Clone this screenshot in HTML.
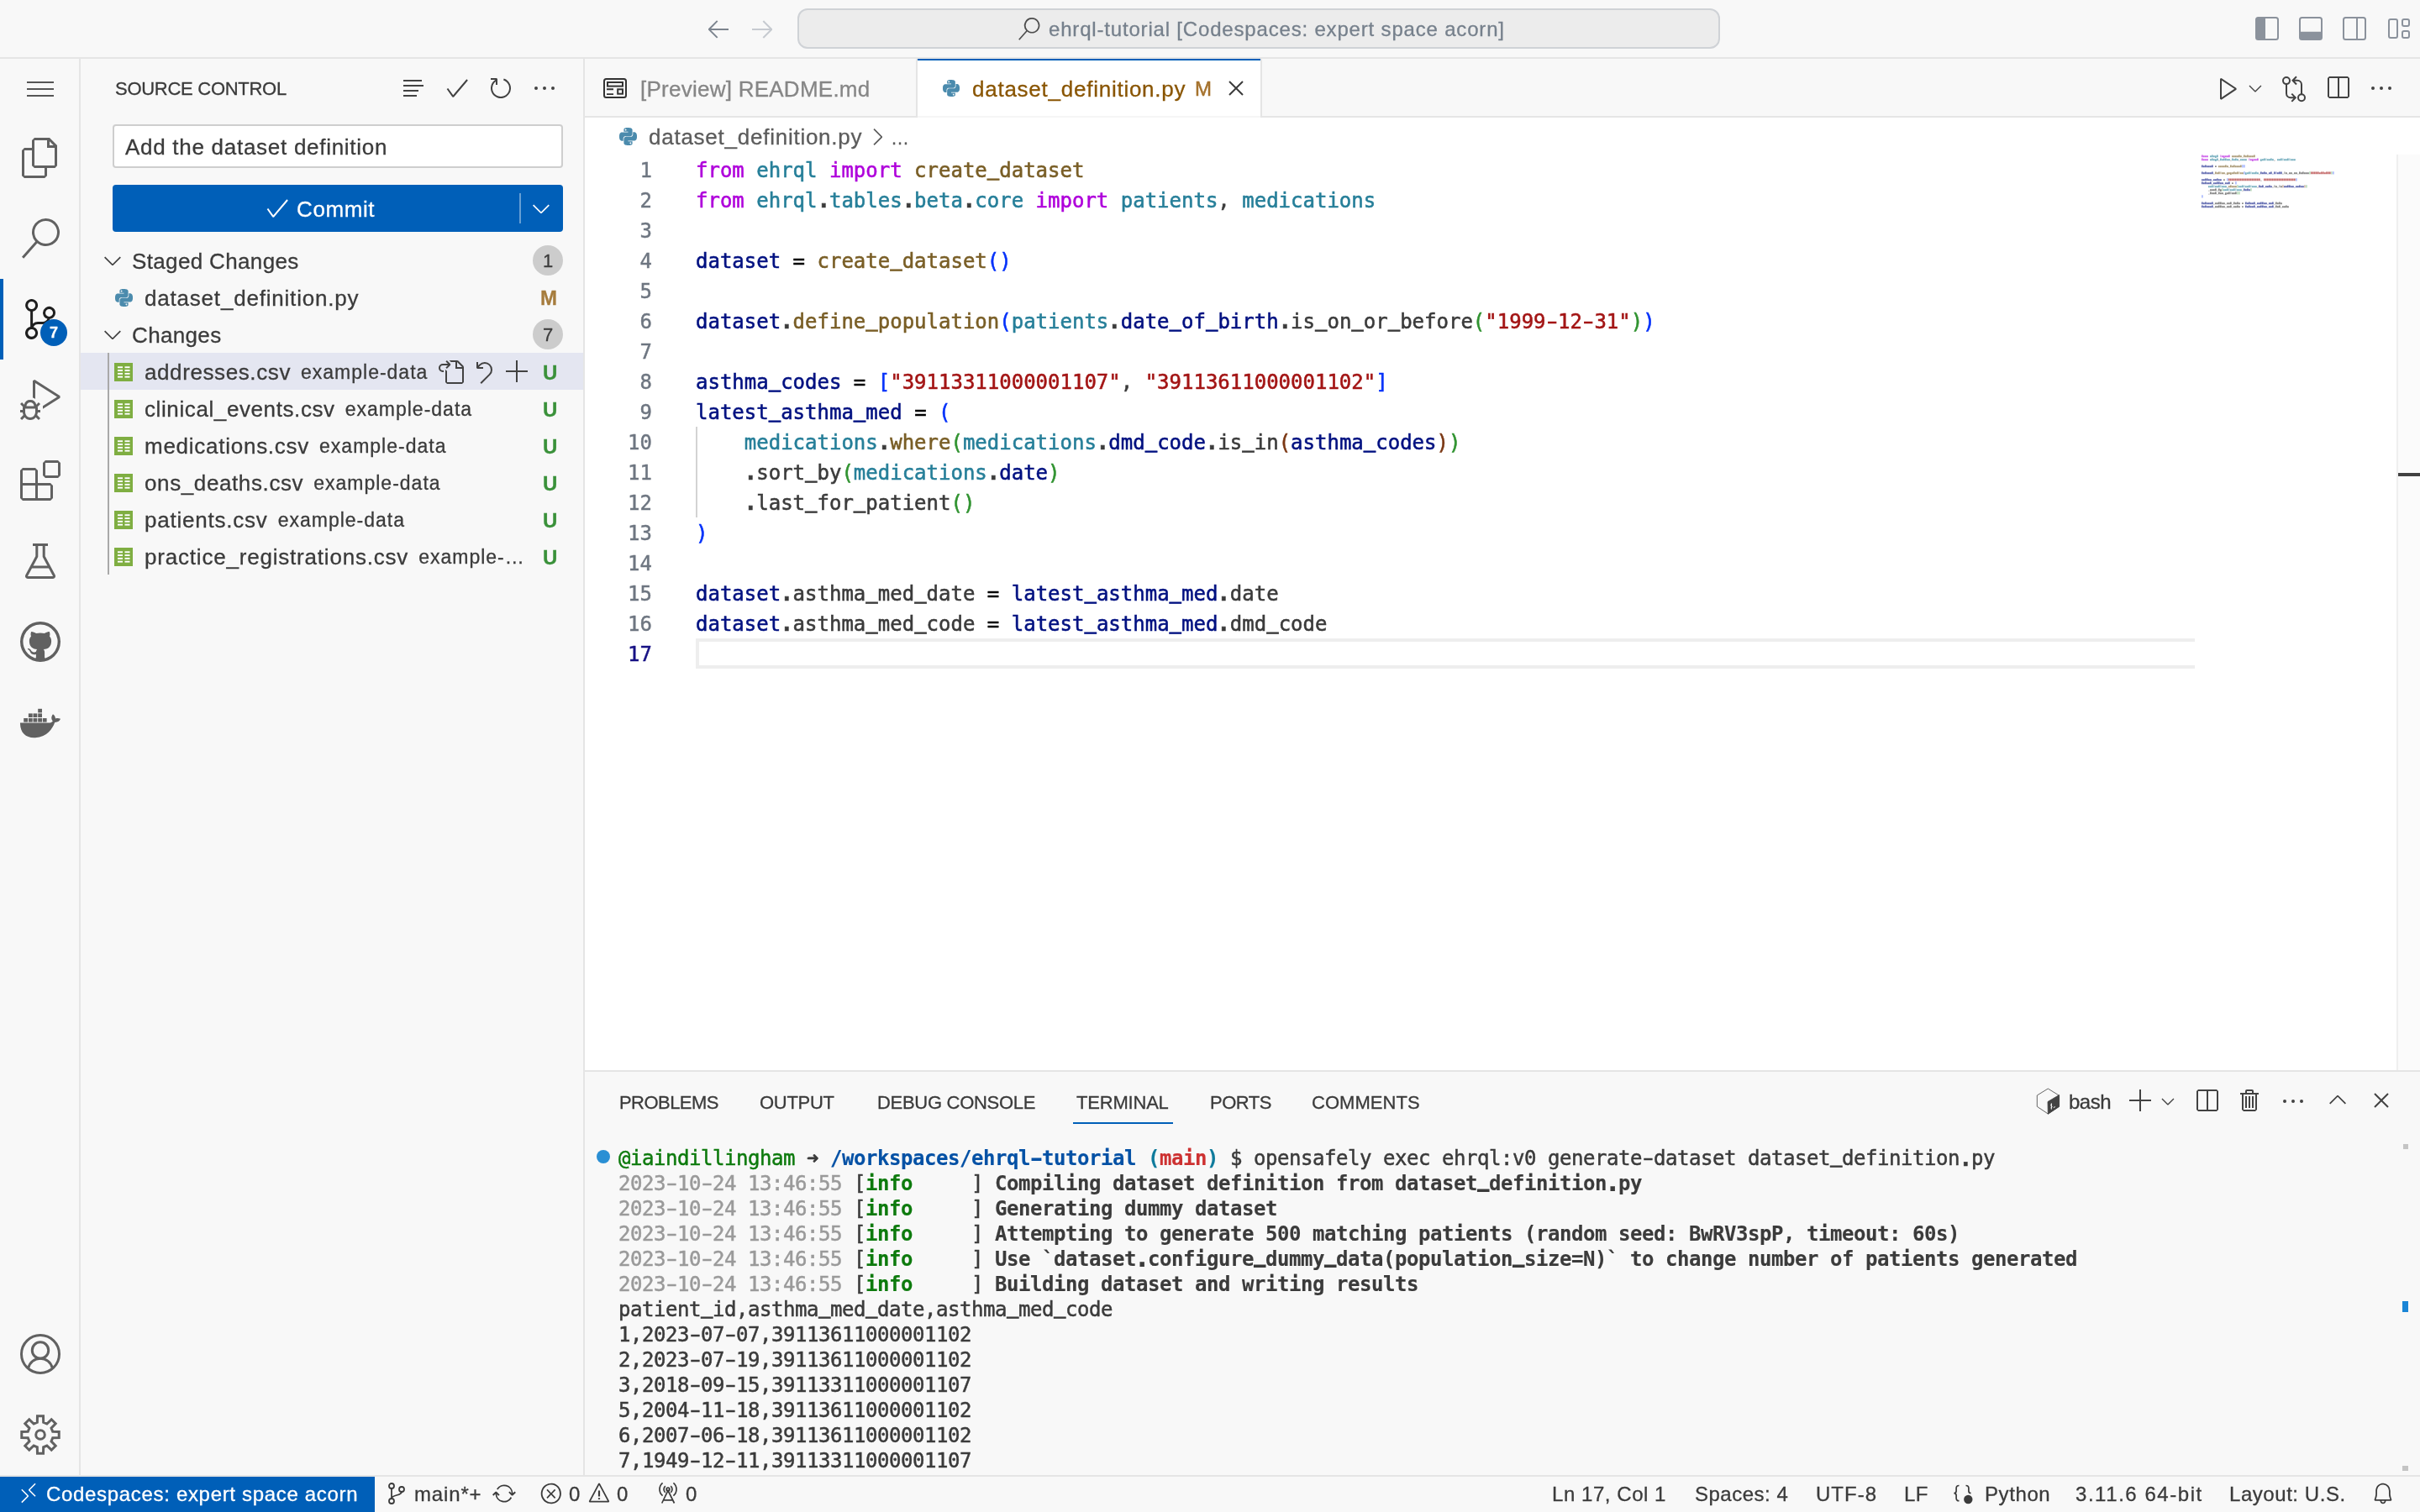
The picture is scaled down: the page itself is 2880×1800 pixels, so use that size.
<!DOCTYPE html>
<html lang="en"><head><meta charset="utf-8"><title>dataset_definition.py — ehrql-tutorial [Codespaces: expert space acorn]</title>
<style>
html,body{margin:0;padding:0;}
body{width:2880px;height:1800px;overflow:hidden;background:#f8f8f8;font-family:"Liberation Sans", Arial, sans-serif;position:relative;-webkit-font-smoothing:antialiased;}
div,svg{box-sizing:border-box;}
.mono{font-family:"DejaVu Sans Mono", "Liberation Mono", monospace;}
.code{position:absolute;left:828px;height:36px;line-height:38px;font-size:24px;font-family:"DejaVu Sans Mono", "Liberation Mono", monospace;white-space:pre;color:#3b3b3b;letter-spacing:0;-webkit-text-stroke:0.55px;}
.ln{position:absolute;left:696px;width:80px;text-align:right;height:36px;line-height:38px;font-size:24px;font-family:"DejaVu Sans Mono", "Liberation Mono", monospace;color:#6e7681;-webkit-text-stroke:0.45px;}
.kw{color:#af00db}.mod{color:#267f99}.fn{color:#795e26}.var{color:#001080}.str{color:#a31515}.op{color:#000}
.b1{color:#0431fa}.b2{color:#319331}.b3{color:#7b3814}
.term{position:absolute;left:736px;height:30px;line-height:30px;font-size:24px;font-family:"DejaVu Sans Mono", "Liberation Mono", monospace;white-space:pre;color:#3b3b3b;letter-spacing:-0.45px;-webkit-text-stroke:0.5px;}
.term b{font-weight:700;-webkit-text-stroke:0.15px;}
.h{display:inline-block;transform:scaleX(1.55);}
.p{display:inline-block;transform:scale(1.35);transform-origin:50% 68%;}
.code .u{transform-origin:50% 32px;}
.u{display:inline-block;transform:translateY(-2.500px) scaleY(1.45);transform-origin:50% 100%;}
.tg{color:#0d7a0d}.tb{color:#0451a5}.tc{color:#0f7b9c}.tr{color:#cd3131}.td{color:#9a9a9a}
.row{position:absolute;left:96px;width:598px;height:44px;line-height:44px;font-size:26px;color:#3b3b3b;white-space:pre;}
</style></head><body><div id="root" style="position:absolute;left:0;top:0;width:2880px;height:1800px;overflow:hidden;will-change:transform;-webkit-text-stroke:0.3px;">

<!-- title bar -->
<div style="position:absolute;left:0px;top:0px;width:2880px;height:70px;background:#f8f8f8;border-bottom:2px solid #e5e5e5;"></div>
<svg style="position:absolute;left:839px;top:18px" width="32" height="32" viewBox="0 0 16 16" ><path fill="#7c848e" fill-rule="evenodd" clip-rule="evenodd" d="M7 3.093l-5 5V8.800l5 5 .707-.707-4.146-4.147H14v-1H3.560L7.707 3.800 7 3.093z"/></svg>
<svg style="position:absolute;left:891px;top:18px" width="32" height="32" viewBox="0 0 16 16" ><path fill="#c6cad0" fill-rule="evenodd" clip-rule="evenodd" d="M9 13.887l5-5V8.180l-5-5-.707.707 4.146 4.147H2v1h10.440L8.293 13.180l.707.707z"/></svg>
<div style="position:absolute;left:949px;top:10px;width:1098px;height:48px;background:#ececec;border:2px solid #cfd2d6;border-radius:12px;"></div>
<svg style="position:absolute;left:1211px;top:21px" width="27" height="27" viewBox="0 0 24 24" ><path fill="#4d4d4d" fill-rule="evenodd" clip-rule="evenodd" d="M15.250 0a8.250 8.250 0 0 0-6.180 13.720L1 22.880l1.120 1 8.050-9.120A8.251 8.251 0 1 0 15.250.010V0zm0 15a6.750 6.750 0 1 1 0-13.500 6.750 6.750 0 0 1 0 13.500z"/></svg>
<div style="position:absolute;left:1248px;top:20px;font-size:24px;line-height:30px;color:#76808c;white-space:pre;letter-spacing:0.82px;">ehrql-tutorial [Codespaces: expert space acorn]</div>
<svg style="position:absolute;left:2684px;top:20px" width="28" height="28" viewBox="0 0 28 28" ><rect x="1" y="1" width="26" height="26" rx="2.500" fill="none" stroke="#8b929c" stroke-width="2"/><path d="M1 3a2 2 0 0 1 2-2h9v26H3a2 2 0 0 1-2-2z" fill="#8b929c"/></svg>
<svg style="position:absolute;left:2736px;top:20px" width="28" height="28" viewBox="0 0 28 28" ><rect x="1" y="1" width="26" height="26" rx="2.500" fill="none" stroke="#8b929c" stroke-width="2"/><path d="M1 17.700h26V25a2 2 0 0 1-2 2H3a2 2 0 0 1-2-2z" fill="#8b929c"/></svg>
<svg style="position:absolute;left:2788px;top:20px" width="28" height="28" viewBox="0 0 28 28" ><rect x="1" y="1" width="26" height="26" rx="2.500" fill="none" stroke="#8b929c" stroke-width="2"/><path d="M17 1v26" stroke="#8b929c" stroke-width="2" fill="none"/></svg>
<svg style="position:absolute;left:2841px;top:20px" width="30" height="28" viewBox="0 0 30 28" ><rect x="2" y="3" width="10" height="22" rx="2" fill="none" stroke="#8b929c" stroke-width="2"/><rect x="18" y="3" width="8" height="8" rx="2" fill="none" stroke="#8b929c" stroke-width="2"/><rect x="18" y="17" width="8" height="8" rx="2" fill="none" stroke="#8b929c" stroke-width="2"/></svg>
<!-- activity bar -->
<div style="position:absolute;left:0px;top:70px;width:96px;height:1686px;background:#f8f8f8;border-right:2px solid #e5e5e5;"></div>
<div style="position:absolute;left:32px;top:97px;width:32px;height:2px;background:#555;"></div>
<div style="position:absolute;left:32px;top:105px;width:32px;height:2px;background:#555;"></div>
<div style="position:absolute;left:32px;top:113px;width:32px;height:2px;background:#555;"></div>
<svg style="position:absolute;left:24px;top:164px" width="48" height="48" viewBox="0 0 24 24" ><path fill="#616161" fill-rule="evenodd" clip-rule="evenodd" d="M17.5 0h-9L7 1.5V6H2.5L1 7.500v15.070L2.500 24h12.070L16 22.570V18h4.700l1.300-1.430V4.500L17.500 0zm0 2.120l2.380 2.380H17.500V2.120zm-3 20.380h-12v-15H7v9.070L8.500 18h6v4.500zm6-6h-12v-15H16V6h4.500v10.500z"/></svg>
<svg style="position:absolute;left:24px;top:260px" width="48" height="48" viewBox="0 0 24 24" ><path fill="#616161" fill-rule="evenodd" clip-rule="evenodd" d="M15.250 0a8.250 8.250 0 0 0-6.180 13.720L1 22.880l1.120 1 8.050-9.120A8.251 8.251 0 1 0 15.250.010V0zm0 15a6.750 6.750 0 1 1 0-13.500 6.750 6.750 0 0 1 0 13.500z"/></svg>
<div style="position:absolute;left:0px;top:332px;width:4px;height:96px;background:#005fb8;"></div>
<svg style="position:absolute;left:24px;top:356px" width="48" height="48" viewBox="0 0 24 24" ><path fill="#1f1f1f" fill-rule="evenodd" clip-rule="evenodd" d="M21.007 8.222A3.738 3.738 0 0 0 15.045 5.200a3.737 3.737 0 0 0 1.156 6.583 2.988 2.988 0 0 1-2.668 1.670h-2.990a4.456 4.456 0 0 0-2.989 1.165V7.400a3.737 3.737 0 1 0-1.494 0v9.117a3.776 3.776 0 1 0 1.816.099 2.990 2.990 0 0 1 2.668-1.667h2.990a4.484 4.484 0 0 0 4.223-3.039 3.736 3.736 0 0 0 3.250-3.687zM4.565 3.738a2.242 2.242 0 1 1 4.484 0 2.242 2.242 0 0 1-4.484 0zm4.484 16.441a2.242 2.242 0 1 1-4.484 0 2.242 2.242 0 0 1 4.484 0zm8.221-9.715a2.242 2.242 0 1 1 0-4.485 2.242 2.242 0 0 1 0 4.485z"/></svg>
<div style="position:absolute;left:48px;top:380px;width:32px;height:32px;border-radius:16px;background:#005fb8;color:#fff;font-size:18px;font-weight:700;line-height:32px;text-align:center;">7</div>
<svg style="position:absolute;left:24px;top:452px" width="48" height="48" viewBox="0 0 24 24" ><path fill="#616161" fill-rule="evenodd" clip-rule="evenodd" d="M10.940 13.500l-1.320 1.320a3.730 3.730 0 0 0-7.240 0L1.060 13.500 0 14.560l1.720 1.720-.220.220V18H0v1.500h1.500v.080c.077.489.214.966.410 1.420L0 22.940 1.060 24l1.650-1.650A4.308 4.308 0 0 0 6 24a4.310 4.310 0 0 0 3.290-1.650L10.940 24 12 22.940 10.090 21c.198-.464.336-.951.410-1.450v-.1H12V18h-1.500v-1.500l-.220-.220L12 14.560l-1.060-1.060zM6 13.500a2.250 2.250 0 0 1 2.250 2.250h-4.500A2.250 2.250 0 0 1 6 13.500zm3 6a3.330 3.330 0 0 1-3 3 3.330 3.330 0 0 1-3-3v-2.250h6v2.250zm14.760-9.900v1.260L13.500 17.370V15.600l8.500-5.370L9 2v9.460a5.070 5.070 0 0 0-1.500-.720V.630L8.640 0l15.120 9.600z"/></svg>
<svg style="position:absolute;left:24px;top:548px" width="48" height="48" viewBox="0 0 24 24" ><path fill="#616161" fill-rule="evenodd" clip-rule="evenodd" d="M13.500 1.500L15 0h7.500L24 1.500V9l-1.500 1.500H15L13.500 9V1.500zm1.500 0V9h7.500V1.500H15zM0 15V6l1.500-1.500H9L10.500 6v7.500H18l1.500 1.500v7.500L18 24H1.500L0 22.500V15zm9-1.500V6H1.500v7.500H9zM9 15H1.500v7.500H9V15zm1.500 7.500H18V15h-7.500v7.500z"/></svg>
<svg style="position:absolute;left:24px;top:644px" width="48" height="48" viewBox="0 0 48 48" ><g fill="none" stroke="#616161" stroke-width="3" stroke-linejoin="round"><path d="M15 4.500h18"/><path d="M19.800 5v13.500L7.600 41.200a1.600 1.600 0 0 0 1.400 2.300h30a1.600 1.600 0 0 0 1.400-2.300L28.200 18.500V5"/><path d="M13.500 31h21"/></g></svg>
<svg style="position:absolute;left:24px;top:740px" width="48" height="48" viewBox="0 0 24 24" ><path fill="#616161" fill-rule="evenodd" clip-rule="evenodd" d="M12 0a12 12 0 1 0 0 24 12 12 0 0 0 0-24zm3.163 21.783h-.093a.513.513 0 0 1-.382-.14.513.513 0 0 1-.14-.372v-1.406c.006-.467.01-.94.01-1.416a3.693 3.693 0 0 0-.151-1.028 1.832 1.832 0 0 0-.542-.875 8.014 8.014 0 0 0 2.038-.471 4.051 4.051 0 0 0 1.466-.964c.407-.427.71-.943.885-1.506a6.770 6.770 0 0 0 .3-2.130 4.138 4.138 0 0 0-.26-1.476 3.892 3.892 0 0 0-.795-1.284 2.810 2.810 0 0 0 .162-.582c.033-.2.05-.402.05-.604 0-.26-.03-.52-.09-.773a5.309 5.309 0 0 0-.221-.763.293.293 0 0 0-.111-.02h-.11c-.23.002-.456.04-.674.111a5.340 5.340 0 0 0-.703.26 6.503 6.503 0 0 0-.661.343c-.215.127-.405.249-.573.362a9.578 9.578 0 0 0-5.143 0 13.507 13.507 0 0 0-.572-.362 6.022 6.022 0 0 0-.672-.342 4.516 4.516 0 0 0-.705-.261 2.203 2.203 0 0 0-.662-.111h-.11a.290.290 0 0 0-.11.02 5.844 5.844 0 0 0-.23.763c-.054.254-.08.513-.081.773 0 .202.017.404.051.604.033.199.086.394.16.582A3.888 3.888 0 0 0 5.702 10a4.142 4.142 0 0 0-.263 1.476 6.871 6.871 0 0 0 .292 2.120c.181.563.483 1.080.884 1.516.415.422.920.750 1.476.964.653.250 1.337.410 2.033.476a1.828 1.828 0 0 0-.452.633 2.990 2.990 0 0 0-.2.744 2.754 2.754 0 0 1-1.175.270 1.788 1.788 0 0 1-1.065-.3 2.904 2.904 0 0 1-.752-.824 3.100 3.100 0 0 0-.292-.382 2.693 2.693 0 0 0-.372-.343 1.841 1.841 0 0 0-.432-.240 1.200 1.200 0 0 0-.481-.101c-.04.001-.08.005-.12.01a.649.649 0 0 0-.162.02.408.408 0 0 0-.13.06.116.116 0 0 0-.06.1.330.330 0 0 0 .14.242c.093.074.17.131.232.171l.03.021c.133.103.261.214.382.333.112.098.213.209.3.330.09.119.168.246.231.381.073.134.15.288.231.463.188.474.522.875.954 1.145.453.243.961.364 1.476.351.174 0 .349-.01.522-.03.172-.028.343-.057.515-.091v1.743a.5.5 0 0 1-.533.521h-.062a10.286 10.286 0 1 1 6.324 0v.005z"/></svg>
<svg style="position:absolute;left:24px;top:836px" width="48" height="48" viewBox="0 0 48 48" ><g fill="#616161"><rect x="4.2" y="19.0" width="4.8" height="4.6"/><rect x="9.9" y="19.0" width="4.8" height="4.6"/><rect x="15.5" y="19.0" width="4.8" height="4.6"/><rect x="21.2" y="19.0" width="4.8" height="4.6"/><rect x="26.8" y="19.0" width="4.8" height="4.6"/><rect x="9.9" y="13.4" width="4.8" height="4.6"/><rect x="15.5" y="13.4" width="4.8" height="4.6"/><rect x="21.2" y="13.4" width="4.8" height="4.6"/><rect x="21.2" y="7.8" width="4.8" height="4.6"/><path d="M0 24.500h35.500c1.400-.200 2.500-.900 3.300-1.900-1.400-1.500-1.700-3.500-1.400-5.200.300-1.200.800-2.300 1.600-3.200 1.900 1.300 2.900 3.200 3 5.200 1.700-.600 4.200-.500 6 .400-.700 2.300-3 4-6.800 4.200C38.500 31.500 32.500 41 18 42.200 6.500 42.800-.200 36 0 24.500z"/></g></svg>
<svg style="position:absolute;left:24px;top:1588px" width="48" height="48" viewBox="0 0 48 48" ><g fill="none" stroke="#616161" stroke-width="3"><circle cx="24" cy="24" r="22.500"/><circle cx="24" cy="19.500" r="9.700"/><path d="M9.800 40.500c1.500-6.500 7.200-11.300 14.200-11.300s12.700 4.800 14.200 11.300"/></g></svg>
<svg style="position:absolute;left:24px;top:1684px" width="48" height="48" viewBox="0 0 48 48" ><g fill="none" stroke="#616161" stroke-width="3" stroke-linejoin="miter"><path d="M20.34 9.25L20.48 1.78L27.52 1.78L27.66 9.25L31.84 10.98L37.23 5.80L42.20 10.77L37.02 16.16L38.75 20.34L46.22 20.48L46.22 27.52L38.75 27.66L37.02 31.84L42.20 37.23L37.23 42.20L31.84 37.02L27.66 38.75L27.52 46.22L20.48 46.22L20.34 38.75L16.16 37.02L10.77 42.20L5.80 37.23L10.98 31.84L9.25 27.66L1.78 27.52L1.78 20.48L9.25 20.34L10.98 16.16L5.80 10.77L10.77 5.80L16.16 10.98Z"/><circle cx="24" cy="24" r="5.300"/></g></svg>
<!-- sidebar -->
<div style="position:absolute;left:96px;top:70px;width:600px;height:1686px;background:#f8f8f8;border-right:2px solid #e5e5e5;"></div>
<div style="position:absolute;left:137px;top:93px;font-size:22px;line-height:26px;color:#3b3b3b;white-space:pre;letter-spacing:-0.28px;">SOURCE CONTROL</div>
<div style="position:absolute;left:480px;top:95px;width:22px;height:2px;background:#424242;"></div>
<div style="position:absolute;left:480px;top:101px;width:24px;height:2px;background:#424242;"></div>
<div style="position:absolute;left:480px;top:107px;width:18px;height:2px;background:#424242;"></div>
<div style="position:absolute;left:480px;top:113px;width:16px;height:2px;background:#424242;"></div>
<svg style="position:absolute;left:528px;top:89px" width="32" height="32" viewBox="0 0 16 16" ><path fill="#424242" fill-rule="evenodd" clip-rule="evenodd" d="M14.431 3.323l-8.47 10-.79-.036-3.35-4.77.818-.574 2.978 4.24 8.051-9.506.764.646z"/></svg>
<svg style="position:absolute;left:580px;top:89px" width="32" height="32" viewBox="0 0 16 16" ><path fill="#424242" fill-rule="evenodd" clip-rule="evenodd" d="M4.681 3H2V2h3.5l.5.5V6H5V4a5 5 0 1 0 4.53-.761l.302-.954A6 6 0 1 1 4.681 3z"/></svg>
<svg style="position:absolute;left:632px;top:89px" width="32" height="32" viewBox="0 0 16 16" ><path fill="#424242" fill-rule="evenodd" clip-rule="evenodd" d="M4 8a1 1 0 1 1-2 0 1 1 0 0 1 2 0zm5 0a1 1 0 1 1-2 0 1 1 0 0 1 2 0zm5 0a1 1 0 1 1-2 0 1 1 0 0 1 2 0z"/></svg>
<div style="position:absolute;left:134px;top:148px;width:536px;height:52px;background:#fff;border:2px solid #cecece;border-radius:4px;"></div>
<div style="position:absolute;left:149px;top:159px;font-size:26px;line-height:32px;color:#3b3b3b;white-space:pre;letter-spacing:0.72px;">Add the dataset definition</div>
<div style="position:absolute;left:134px;top:220px;width:536px;height:56px;background:#005fb8;border-radius:4px;"></div>
<svg style="position:absolute;left:314px;top:232px" width="32" height="32" viewBox="0 0 16 16" ><path fill="#fff" fill-rule="evenodd" clip-rule="evenodd" d="M14.431 3.323l-8.47 10-.79-.036-3.35-4.77.818-.574 2.978 4.24 8.051-9.506.764.646z"/></svg>
<div style="position:absolute;left:353px;top:233px;font-size:26px;line-height:32px;color:#fff;white-space:pre;letter-spacing:0.6px;">Commit</div>
<div style="position:absolute;left:618px;top:230px;width:2px;height:36px;background:rgba(255,255,255,0.4);"></div>
<svg style="position:absolute;left:628px;top:232px" width="32" height="32" viewBox="0 0 16 16" ><path fill="#fff" fill-rule="evenodd" clip-rule="evenodd" d="M7.976 10.072l4.357-4.357.62.618L8.284 11h-.618L3 6.333l.619-.618 4.357 4.357z"/></svg>
<svg style="position:absolute;left:118px;top:294px" width="32" height="32" viewBox="0 0 16 16" ><path fill="#424242" fill-rule="evenodd" clip-rule="evenodd" d="M7.976 10.072l4.357-4.357.62.618L8.284 11h-.618L3 6.333l.619-.618 4.357 4.357z"/></svg><div style="position:absolute;left:157px;top:289px;font-size:26px;line-height:44px;color:#3b3b3b;white-space:pre;letter-spacing:0.35px;">Staged Changes</div><div style="position:absolute;left:634px;top:292px;width:36px;height:36px;border-radius:18px;background:#cccccc;color:#3b3b3b;font-size:22px;line-height:38px;text-align:center;">1</div>
<svg style="position:absolute;left:137px;top:344px" width="21" height="21" viewBox="0 0 24 24" ><path fill="#4b8bad" fill-rule="evenodd" clip-rule="evenodd" d="M14.25.18l.9.2.73.26.59.3.45.32.34.34.25.34.16.33.1.3.04.26.02.2-.01.13V8.5l-.05.63-.13.55-.21.46-.26.38-.3.31-.33.25-.35.19-.35.14-.33.1-.3.07-.26.04-.21.02H8.77l-.69.05-.59.14-.5.22-.41.27-.33.32-.27.35-.2.36-.15.37-.1.35-.07.32-.04.27-.02.21v3.06H3.17l-.21-.03-.28-.07-.32-.12-.35-.18-.36-.26-.36-.36-.35-.46-.32-.59-.28-.73-.21-.88-.14-1.05-.05-1.23.06-1.22.16-1.04.24-.87.32-.71.36-.57.4-.44.42-.33.42-.24.4-.16.36-.1.32-.05.24-.01h.16l.06.01h8.16v-.83H6.18l-.01-2.75-.02-.37.05-.34.11-.31.17-.28.25-.26.31-.23.38-.2.44-.18.51-.15.58-.12.64-.1.71-.06.77-.04.84-.02 1.27.05zm-6.3 1.98l-.23.33-.08.41.08.41.23.34.33.22.41.09.41-.09.33-.22.23-.34.08-.41-.08-.41-.23-.33-.33-.22-.41-.09-.41.09zm13.090 3.950l.28.06.32.12.35.18.36.27.36.35.35.47.32.59.28.73.21.88.14 1.040.05 1.230-.06 1.230-.16 1.040-.24.86-.32.71-.36.57-.4.45-.42.33-.42.24-.4.16-.36.09-.32.05-.24.02-.16-.01h-8.220v.82h5.840l.01 2.760.02.36-.05.34-.11.31-.17.29-.25.25-.31.24-.38.2-.44.17-.51.15-.58.13-.64.09-.71.07-.77.04-.84.01-1.270-.04-1.070-.14-.9-.2-.73-.25-.59-.3-.45-.33-.34-.34-.25-.34-.16-.33-.1-.3-.04-.25-.02-.2.01-.13v-5.340l.05-.64.13-.54.21-.46.26-.38.3-.32.33-.24.35-.2.35-.14.33-.1.3-.06.26-.04.21-.02.13-.01h5.840l.69-.05.59-.14.5-.21.41-.28.33-.32.27-.35.2-.36.15-.36.1-.35.07-.32.04-.28.02-.21V6.070h2.090l.14.01zm-6.470 14.250l-.23.33-.08.41.08.41.23.33.33.23.41.08.41-.08.33-.23.23-.33.08-.41-.08-.41-.23-.33-.33-.23-.41-.08-.41.08z"/></svg>
<div style="position:absolute;left:172px;top:333px;font-size:26px;line-height:44px;color:#3b3b3b;white-space:pre;letter-spacing:0.8px;">dataset_definition.py</div>
<div style="position:absolute;left:643px;top:333px;font-size:24px;line-height:44px;color:#a67c3d;white-space:pre;font-weight:700;">M</div>
<svg style="position:absolute;left:118px;top:382px" width="32" height="32" viewBox="0 0 16 16" ><path fill="#424242" fill-rule="evenodd" clip-rule="evenodd" d="M7.976 10.072l4.357-4.357.62.618L8.284 11h-.618L3 6.333l.619-.618 4.357 4.357z"/></svg><div style="position:absolute;left:157px;top:377px;font-size:26px;line-height:44px;color:#3b3b3b;white-space:pre;letter-spacing:0.35px;">Changes</div><div style="position:absolute;left:634px;top:380px;width:36px;height:36px;border-radius:18px;background:#cccccc;color:#3b3b3b;font-size:22px;line-height:38px;text-align:center;">7</div>
<div style="position:absolute;left:96px;top:420px;width:598px;height:44px;background:#e4e6f1;"></div>
<div style="position:absolute;left:128px;top:420px;width:2px;height:264px;background:#a9a9a9;"></div>
<svg style="position:absolute;left:136px;top:432px" width="22" height="22" viewBox="0 0 22 22" ><rect x="0" y="0" width="22" height="22" fill="#7fae42"/><rect x="4" y="4.3" width="6" height="1.900" fill="#fff"/><rect x="12.5" y="4.3" width="6" height="1.900" fill="#fff"/><rect x="4" y="8.1" width="6" height="1.900" fill="#fff"/><rect x="12.5" y="8.1" width="6" height="1.900" fill="#fff"/><rect x="4" y="11.9" width="6" height="1.900" fill="#fff"/><rect x="12.5" y="11.9" width="6" height="1.900" fill="#fff"/><rect x="4" y="15.7" width="6" height="1.900" fill="#fff"/><rect x="12.5" y="15.7" width="6" height="1.900" fill="#fff"/></svg>
<div class="row" style="left:172px;top:421px;width:454px;letter-spacing:0.6px;display:flex;overflow:hidden;"><span style="flex:none;">addresses.csv</span><span style="flex:0 1 auto;min-width:0;overflow:hidden;text-overflow:ellipsis;font-size:23px;letter-spacing:1.0px;margin-left:12px;">example-data</span></div>
<div style="position:absolute;left:646px;top:422px;font-size:24px;line-height:44px;color:#3a913a;white-space:pre;font-weight:700;">U</div>
<svg style="position:absolute;left:136px;top:476px" width="22" height="22" viewBox="0 0 22 22" ><rect x="0" y="0" width="22" height="22" fill="#7fae42"/><rect x="4" y="4.3" width="6" height="1.900" fill="#fff"/><rect x="12.5" y="4.3" width="6" height="1.900" fill="#fff"/><rect x="4" y="8.1" width="6" height="1.900" fill="#fff"/><rect x="12.5" y="8.1" width="6" height="1.900" fill="#fff"/><rect x="4" y="11.9" width="6" height="1.900" fill="#fff"/><rect x="12.5" y="11.9" width="6" height="1.900" fill="#fff"/><rect x="4" y="15.7" width="6" height="1.900" fill="#fff"/><rect x="12.5" y="15.7" width="6" height="1.900" fill="#fff"/></svg>
<div class="row" style="left:172px;top:465px;width:454px;letter-spacing:0.6px;display:flex;overflow:hidden;"><span style="flex:none;">clinical_events.csv</span><span style="flex:0 1 auto;min-width:0;overflow:hidden;text-overflow:ellipsis;font-size:23px;letter-spacing:1.0px;margin-left:12px;">example-data</span></div>
<div style="position:absolute;left:646px;top:466px;font-size:24px;line-height:44px;color:#3a913a;white-space:pre;font-weight:700;">U</div>
<svg style="position:absolute;left:136px;top:520px" width="22" height="22" viewBox="0 0 22 22" ><rect x="0" y="0" width="22" height="22" fill="#7fae42"/><rect x="4" y="4.3" width="6" height="1.900" fill="#fff"/><rect x="12.5" y="4.3" width="6" height="1.900" fill="#fff"/><rect x="4" y="8.1" width="6" height="1.900" fill="#fff"/><rect x="12.5" y="8.1" width="6" height="1.900" fill="#fff"/><rect x="4" y="11.9" width="6" height="1.900" fill="#fff"/><rect x="12.5" y="11.9" width="6" height="1.900" fill="#fff"/><rect x="4" y="15.7" width="6" height="1.900" fill="#fff"/><rect x="12.5" y="15.7" width="6" height="1.900" fill="#fff"/></svg>
<div class="row" style="left:172px;top:509px;width:454px;letter-spacing:0.74px;display:flex;overflow:hidden;"><span style="flex:none;">medications.csv</span><span style="flex:0 1 auto;min-width:0;overflow:hidden;text-overflow:ellipsis;font-size:23px;letter-spacing:1.0px;margin-left:12px;">example-data</span></div>
<div style="position:absolute;left:646px;top:510px;font-size:24px;line-height:44px;color:#3a913a;white-space:pre;font-weight:700;">U</div>
<svg style="position:absolute;left:136px;top:564px" width="22" height="22" viewBox="0 0 22 22" ><rect x="0" y="0" width="22" height="22" fill="#7fae42"/><rect x="4" y="4.3" width="6" height="1.900" fill="#fff"/><rect x="12.5" y="4.3" width="6" height="1.900" fill="#fff"/><rect x="4" y="8.1" width="6" height="1.900" fill="#fff"/><rect x="12.5" y="8.1" width="6" height="1.900" fill="#fff"/><rect x="4" y="11.9" width="6" height="1.900" fill="#fff"/><rect x="12.5" y="11.9" width="6" height="1.900" fill="#fff"/><rect x="4" y="15.7" width="6" height="1.900" fill="#fff"/><rect x="12.5" y="15.7" width="6" height="1.900" fill="#fff"/></svg>
<div class="row" style="left:172px;top:553px;width:454px;letter-spacing:0.61px;display:flex;overflow:hidden;"><span style="flex:none;">ons_deaths.csv</span><span style="flex:0 1 auto;min-width:0;overflow:hidden;text-overflow:ellipsis;font-size:23px;letter-spacing:1.0px;margin-left:12px;">example-data</span></div>
<div style="position:absolute;left:646px;top:554px;font-size:24px;line-height:44px;color:#3a913a;white-space:pre;font-weight:700;">U</div>
<svg style="position:absolute;left:136px;top:608px" width="22" height="22" viewBox="0 0 22 22" ><rect x="0" y="0" width="22" height="22" fill="#7fae42"/><rect x="4" y="4.3" width="6" height="1.900" fill="#fff"/><rect x="12.5" y="4.3" width="6" height="1.900" fill="#fff"/><rect x="4" y="8.1" width="6" height="1.900" fill="#fff"/><rect x="12.5" y="8.1" width="6" height="1.900" fill="#fff"/><rect x="4" y="11.9" width="6" height="1.900" fill="#fff"/><rect x="12.5" y="11.9" width="6" height="1.900" fill="#fff"/><rect x="4" y="15.7" width="6" height="1.900" fill="#fff"/><rect x="12.5" y="15.7" width="6" height="1.900" fill="#fff"/></svg>
<div class="row" style="left:172px;top:597px;width:454px;letter-spacing:0.78px;display:flex;overflow:hidden;"><span style="flex:none;">patients.csv</span><span style="flex:0 1 auto;min-width:0;overflow:hidden;text-overflow:ellipsis;font-size:23px;letter-spacing:1.0px;margin-left:12px;">example-data</span></div>
<div style="position:absolute;left:646px;top:598px;font-size:24px;line-height:44px;color:#3a913a;white-space:pre;font-weight:700;">U</div>
<svg style="position:absolute;left:136px;top:652px" width="22" height="22" viewBox="0 0 22 22" ><rect x="0" y="0" width="22" height="22" fill="#7fae42"/><rect x="4" y="4.3" width="6" height="1.900" fill="#fff"/><rect x="12.5" y="4.3" width="6" height="1.900" fill="#fff"/><rect x="4" y="8.1" width="6" height="1.900" fill="#fff"/><rect x="12.5" y="8.1" width="6" height="1.900" fill="#fff"/><rect x="4" y="11.9" width="6" height="1.900" fill="#fff"/><rect x="12.5" y="11.9" width="6" height="1.900" fill="#fff"/><rect x="4" y="15.7" width="6" height="1.900" fill="#fff"/><rect x="12.5" y="15.7" width="6" height="1.900" fill="#fff"/></svg>
<div class="row" style="left:172px;top:641px;width:454px;letter-spacing:0.8px;display:flex;overflow:hidden;"><span style="flex:none;">practice_registrations.csv</span><span style="flex:0 1 auto;min-width:0;overflow:hidden;text-overflow:ellipsis;font-size:23px;letter-spacing:1.0px;margin-left:12px;">example-data</span></div>
<div style="position:absolute;left:646px;top:642px;font-size:24px;line-height:44px;color:#3a913a;white-space:pre;font-weight:700;">U</div>
<svg style="position:absolute;left:520px;top:427px" width="32" height="32" viewBox="0 0 16 16" ><path fill="#424242" fill-rule="evenodd" clip-rule="evenodd" d="M6 5.914l2.06-2.06v-.708L5.915 1l-.707.707.043.043.25.25 1 1h-3a2.5 2.5 0 0 0 0 5H4V7h-.5a1.5 1.5 0 1 1 0-3h3L5.207 5.293 5.914 6 6 5.914zM11 2H8.328l-1-1H12l.71.29 3 3L16 5v9l-1 1H6l-1-1V6.5l1 .847V14h9V6h-4V2zm1 0v3h3l-3-3z"/></svg>
<svg style="position:absolute;left:560px;top:427px" width="32" height="32" viewBox="0 0 16 16" ><path fill="#424242" fill-rule="evenodd" clip-rule="evenodd" d="M3.5 2v3.5L4 6h3.5V5H4.979l.941-.941a3.552 3.552 0 1 1 5.023 5.023L5.746 14.28l.72.72 5.198-5.198A4.57 4.57 0 0 0 5.2 3.339l-.7.7V2h-1z"/></svg>
<svg style="position:absolute;left:600px;top:427px" width="32" height="32" viewBox="0 0 16 16" ><path fill="#424242" fill-rule="evenodd" clip-rule="evenodd" d="M14 7v1H8v6H7V8H1V7h6V1h1v6h6z"/></svg>
<!-- editor -->
<div style="position:absolute;left:696px;top:70px;width:2184px;height:70px;background:#f8f8f8;border-bottom:2px solid #e5e5e5;"></div>
<div style="position:absolute;left:696px;top:140px;width:2184px;height:1134px;background:#fff;"></div>
<div style="position:absolute;left:696px;top:70px;width:396px;height:70px;background:#f8f8f8;border-right:2px solid #e5e5e5;border-bottom:2px solid #e5e5e5;"></div>
<svg style="position:absolute;left:718px;top:93px" width="28" height="24" viewBox="0 0 28 24" ><g fill="none" stroke="#333" stroke-width="2"><rect x="1" y="1" width="26" height="22" rx="2.500"/><rect x="5" y="5" width="18" height="4.600"/><rect x="17.200" y="13.300" width="5.800" height="5.400"/></g><path d="M4 12.300h8v1.900H4zM4 18.200h8v1.900H4z" fill="#333"/></svg>
<div style="position:absolute;left:762px;top:89px;font-size:26px;line-height:34px;color:#868686;white-space:pre;letter-spacing:0.25px;">[Preview] README.md</div>
<div style="position:absolute;left:1092px;top:70px;width:408px;height:70px;background:#fff;"></div>
<div style="position:absolute;left:1092px;top:70px;width:408px;height:2px;background:#005fb8;"></div>
<div style="position:absolute;left:1500px;top:70px;width:2px;height:68px;background:#e5e5e5;"></div>
<div style="position:absolute;left:1092px;top:138px;width:408px;height:2px;background:#f6f6f6;"></div>
<svg style="position:absolute;left:1122px;top:95px" width="20" height="20" viewBox="0 0 24 24" ><path fill="#4b8bad" fill-rule="evenodd" clip-rule="evenodd" d="M14.25.18l.9.2.73.26.59.3.45.32.34.34.25.34.16.33.1.3.04.26.02.2-.01.13V8.5l-.05.63-.13.55-.21.46-.26.38-.3.31-.33.25-.35.19-.35.14-.33.1-.3.07-.26.04-.21.02H8.77l-.69.05-.59.14-.5.22-.41.27-.33.32-.27.35-.2.36-.15.37-.1.35-.07.32-.04.27-.02.21v3.06H3.17l-.21-.03-.28-.07-.32-.12-.35-.18-.36-.26-.36-.36-.35-.46-.32-.59-.28-.73-.21-.88-.14-1.05-.05-1.23.06-1.22.16-1.04.24-.87.32-.71.36-.57.4-.44.42-.33.42-.24.4-.16.36-.1.32-.05.24-.01h.16l.06.01h8.16v-.83H6.18l-.01-2.75-.02-.37.05-.34.11-.31.17-.28.25-.26.31-.23.38-.2.44-.18.51-.15.58-.12.64-.1.71-.06.77-.04.84-.02 1.27.05zm-6.3 1.98l-.23.33-.08.41.08.41.23.34.33.22.41.09.41-.09.33-.22.23-.34.08-.41-.08-.41-.23-.33-.33-.22-.41-.09-.41.09zm13.090 3.950l.28.06.32.12.35.18.36.27.36.35.35.47.32.59.28.73.21.88.14 1.040.05 1.230-.06 1.230-.16 1.040-.24.86-.32.71-.36.57-.4.45-.42.33-.42.24-.4.16-.36.09-.32.05-.24.02-.16-.01h-8.220v.82h5.840l.01 2.760.02.36-.05.34-.11.31-.17.29-.25.25-.31.24-.38.2-.44.17-.51.15-.58.13-.64.09-.71.07-.77.04-.84.01-1.270-.04-1.070-.14-.9-.2-.73-.25-.59-.3-.45-.33-.34-.34-.25-.34-.16-.33-.1-.3-.04-.25-.02-.2.01-.13v-5.340l.05-.64.13-.54.21-.46.26-.38.3-.32.33-.24.35-.2.35-.14.33-.1.3-.06.26-.04.21-.02.13-.01h5.840l.69-.05.59-.14.5-.21.41-.28.33-.32.27-.35.2-.36.15-.36.1-.35.07-.32.04-.28.02-.21V6.070h2.090l.14.01zm-6.470 14.250l-.23.33-.08.41.08.41.23.33.33.23.41.08.41-.08.33-.23.23-.33.08-.41-.08-.41-.23-.33-.33-.23-.41-.08-.41.08z"/></svg>
<div style="position:absolute;left:1157px;top:89px;font-size:26px;line-height:34px;color:#895503;white-space:pre;letter-spacing:0.75px;">dataset_definition.py</div>
<div style="position:absolute;left:1422px;top:89px;font-size:24px;line-height:34px;color:#a5722d;white-space:pre;-webkit-text-stroke:0.5px #a5722d;">M</div>
<svg style="position:absolute;left:1455px;top:89px" width="32" height="32" viewBox="0 0 16 16" ><path fill="#3b3b3b" fill-rule="evenodd" clip-rule="evenodd" d="M8 8.707l3.646 3.647.708-.707L8.707 8l3.647-3.646-.707-.708L8 7.293 4.354 3.646l-.707.708L7.293 8l-3.646 3.646.707.708L8 8.707z"/></svg>
<svg style="position:absolute;left:2636px;top:89px" width="32" height="32" viewBox="0 0 16 16" ><path fill="#424242" fill-rule="evenodd" clip-rule="evenodd" d="M3.78 2L3 2.41v12l.78.42 9-6V8l-9-6zM4 13.48V3.35l7.6 5.07L4 13.48z"/></svg>
<svg style="position:absolute;left:2672px;top:93px" width="24" height="24" viewBox="0 0 16 16" ><path fill="#424242" fill-rule="evenodd" clip-rule="evenodd" d="M7.976 10.072l4.357-4.357.62.618L8.284 11h-.618L3 6.333l.619-.618 4.357 4.357z"/></svg>
<svg style="position:absolute;left:2714px;top:90px" width="32" height="32" viewBox="0 0 32 32" ><g fill="none" stroke="#424242" stroke-width="2"><circle cx="7" cy="6.100" r="4"/><circle cx="25" cy="26.200" r="4"/><path d="M7 10.100v11.100a5 5 0 0 0 5 5h5.500M13.300 21.600l4.500 4.600-4.500 4.700"/><path d="M25 22.200V10.800a5 5 0 0 0-5-5h-5.300M19 1.200l-4.500 4.600 4.500 4.700"/></g></svg>
<svg style="position:absolute;left:2766px;top:89px" width="32" height="32" viewBox="0 0 16 16" ><path fill="#424242" fill-rule="evenodd" clip-rule="evenodd" d="M14 1H3L2 2v11l1 1h11l1-1V2l-1-1zM8 13H3V2h5v11zm6 0H9V2h5v11z"/></svg>
<svg style="position:absolute;left:2818px;top:89px" width="32" height="32" viewBox="0 0 16 16" ><path fill="#424242" fill-rule="evenodd" clip-rule="evenodd" d="M4 8a1 1 0 1 1-2 0 1 1 0 0 1 2 0zm5 0a1 1 0 1 1-2 0 1 1 0 0 1 2 0zm5 0a1 1 0 1 1-2 0 1 1 0 0 1 2 0z"/></svg>
<svg style="position:absolute;left:737px;top:152px" width="21" height="21" viewBox="0 0 24 24" ><path fill="#4b8bad" fill-rule="evenodd" clip-rule="evenodd" d="M14.25.18l.9.2.73.26.59.3.45.32.34.34.25.34.16.33.1.3.04.26.02.2-.01.13V8.5l-.05.63-.13.55-.21.46-.26.38-.3.31-.33.25-.35.19-.35.14-.33.1-.3.07-.26.04-.21.02H8.77l-.69.05-.59.14-.5.22-.41.27-.33.32-.27.35-.2.36-.15.37-.1.35-.07.32-.04.27-.02.21v3.06H3.17l-.21-.03-.28-.07-.32-.12-.35-.18-.36-.26-.36-.36-.35-.46-.32-.59-.28-.73-.21-.88-.14-1.05-.05-1.23.06-1.22.16-1.04.24-.87.32-.71.36-.57.4-.44.42-.33.42-.24.4-.16.36-.1.32-.05.24-.01h.16l.06.01h8.16v-.83H6.18l-.01-2.75-.02-.37.05-.34.11-.31.17-.28.25-.26.31-.23.38-.2.44-.18.51-.15.58-.12.64-.1.71-.06.77-.04.84-.02 1.27.05zm-6.3 1.98l-.23.33-.08.41.08.41.23.34.33.22.41.09.41-.09.33-.22.23-.34.08-.41-.08-.41-.23-.33-.33-.22-.41-.09-.41.09zm13.090 3.950l.28.06.32.12.35.18.36.27.36.35.35.47.32.59.28.73.21.88.14 1.040.05 1.230-.06 1.230-.16 1.040-.24.86-.32.71-.36.57-.4.45-.42.33-.42.24-.4.16-.36.09-.32.05-.24.02-.16-.01h-8.220v.82h5.840l.01 2.760.02.36-.05.34-.11.31-.17.29-.25.25-.31.24-.38.2-.44.17-.51.15-.58.13-.64.09-.71.07-.77.04-.84.01-1.270-.04-1.070-.14-.9-.2-.73-.25-.59-.3-.45-.33-.34-.34-.25-.34-.16-.33-.1-.3-.04-.25-.02-.2.01-.13v-5.340l.05-.64.13-.54.21-.46.26-.38.3-.32.33-.24.35-.2.35-.14.33-.1.3-.06.26-.04.21-.02.13-.01h5.840l.69-.05.59-.14.5-.21.41-.28.33-.32.27-.35.2-.36.15-.36.1-.35.07-.32.04-.28.02-.21V6.070h2.090l.14.01zm-6.470 14.250l-.23.33-.08.41.08.41.23.33.33.23.41.08.41-.08.33-.23.23-.33.08-.41-.08-.41-.23-.33-.33-.23-.41-.08-.41.08z"/></svg>
<div style="position:absolute;left:772px;top:146px;font-size:26px;line-height:34px;color:#5c5c5c;white-space:pre;letter-spacing:0.75px;">dataset_definition.py</div>
<svg style="position:absolute;left:1028px;top:147px" width="32" height="32" viewBox="0 0 16 16" ><path fill="#5c5c5c" fill-rule="evenodd" clip-rule="evenodd" d="M10.072 8.024L5.715 3.667l.618-.62L11 7.716v.618L6.333 13l-.618-.619 4.357-4.357z"/></svg>
<div style="position:absolute;left:1060px;top:148px;font-size:22px;line-height:34px;color:#5c5c5c;white-space:pre;">…</div>
<div style="position:absolute;left:828px;top:760px;width:1784px;height:36px;border:4px solid #eeeeee;border-right:none;"></div>
<div style="position:absolute;left:828px;top:508px;width:2px;height:108px;background:#d3d3d3;"></div>
<div class="ln" style="top:184px">1</div>
<div class="code" style="top:184px"><span class="kw">from</span> <span class="mod">ehrql</span> <span class="kw">import</span> <span class="fn">create<span class="u">_</span>dataset</span></div>
<div class="ln" style="top:220px">2</div>
<div class="code" style="top:220px"><span class="kw">from</span> <span class="mod">ehrql</span><span class="p">.</span><span class="mod">tables</span><span class="p">.</span><span class="mod">beta</span><span class="p">.</span><span class="mod">core</span> <span class="kw">import</span> <span class="mod">patients</span>, <span class="mod">medications</span></div>
<div class="ln" style="top:256px">3</div>
<div class="ln" style="top:292px">4</div>
<div class="code" style="top:292px"><span class="var">dataset</span> <span class="op">=</span> <span class="fn">create<span class="u">_</span>dataset</span><span class="b1">()</span></div>
<div class="ln" style="top:328px">5</div>
<div class="ln" style="top:364px">6</div>
<div class="code" style="top:364px"><span class="var">dataset</span><span class="p">.</span><span class="fn">define<span class="u">_</span>population</span><span class="b1">(</span><span class="mod">patients</span><span class="p">.</span><span class="var">date<span class="u">_</span>of<span class="u">_</span>birth</span><span class="p">.</span>is<span class="u">_</span>on<span class="u">_</span>or<span class="u">_</span>before<span class="b2">(</span><span class="str">"1999<span class="h">-</span>12<span class="h">-</span>31"</span><span class="b2">)</span><span class="b1">)</span></div>
<div class="ln" style="top:400px">7</div>
<div class="ln" style="top:436px">8</div>
<div class="code" style="top:436px"><span class="var">asthma<span class="u">_</span>codes</span> <span class="op">=</span> <span class="b1">[</span><span class="str">"39113311000001107"</span>, <span class="str">"39113611000001102"</span><span class="b1">]</span></div>
<div class="ln" style="top:472px">9</div>
<div class="code" style="top:472px"><span class="var">latest<span class="u">_</span>asthma<span class="u">_</span>med</span> <span class="op">=</span> <span class="b1">(</span></div>
<div class="ln" style="top:508px">10</div>
<div class="code" style="top:508px">    <span class="mod">medications</span><span class="p">.</span><span class="fn">where</span><span class="b2">(</span><span class="mod">medications</span><span class="p">.</span><span class="var">dmd<span class="u">_</span>code</span><span class="p">.</span>is<span class="u">_</span>in<span class="b3">(</span><span class="var">asthma<span class="u">_</span>codes</span><span class="b3">)</span><span class="b2">)</span></div>
<div class="ln" style="top:544px">11</div>
<div class="code" style="top:544px">    <span class="p">.</span>sort<span class="u">_</span>by<span class="b2">(</span><span class="mod">medications</span><span class="p">.</span><span class="var">date</span><span class="b2">)</span></div>
<div class="ln" style="top:580px">12</div>
<div class="code" style="top:580px">    <span class="p">.</span>last<span class="u">_</span>for<span class="u">_</span>patient<span class="b2">()</span></div>
<div class="ln" style="top:616px">13</div>
<div class="code" style="top:616px"><span class="b1">)</span></div>
<div class="ln" style="top:652px">14</div>
<div class="ln" style="top:688px">15</div>
<div class="code" style="top:688px"><span class="var">dataset</span><span class="p">.</span>asthma<span class="u">_</span>med<span class="u">_</span>date <span class="op">=</span> <span class="var">latest<span class="u">_</span>asthma<span class="u">_</span>med</span><span class="p">.</span>date</div>
<div class="ln" style="top:724px">16</div>
<div class="code" style="top:724px"><span class="var">dataset</span><span class="p">.</span>asthma<span class="u">_</span>med<span class="u">_</span>code <span class="op">=</span> <span class="var">latest<span class="u">_</span>asthma<span class="u">_</span>med</span><span class="p">.</span>dmd<span class="u">_</span>code</div>
<div class="ln" style="top:760px;color:#171184">17</div>
<svg style="position:absolute;left:2620px;top:184px" width="232" height="72" viewBox="0 0 232 72" ><g opacity="0.62"><path fill="#af00db" d="M0 0.4h1.7v2.900h-1.700zM2 1.3h1.8v2h-1.800zM4 1.3h1.8v2h-1.800zM6 1.3h1.8v2h-1.800zM22.4 0.6h1v2.700h-1zM24 1.3h1.8v2h-1.800zM26 1.3h1.7v2.600h-1.700zM28 1.3h1.8v2h-1.800zM30 1.3h1.8v2h-1.800zM32 0.4h1.7v2.900h-1.700zM0 4.4h1.7v2.900h-1.700zM2 5.3h1.8v2h-1.800zM4 5.3h1.8v2h-1.800zM6 5.3h1.8v2h-1.800zM56.4 4.6h1v2.700h-1zM58 5.3h1.8v2h-1.800zM60 5.3h1.7v2.600h-1.700zM62 5.3h1.8v2h-1.800zM64 5.3h1.8v2h-1.800zM66 4.4h1.7v2.900h-1.700z"/><path fill="#267f99" d="M10 1.3h1.8v2h-1.800zM12 0.4h1.7v2.900h-1.700zM14 1.3h1.8v2h-1.800zM16 1.3h1.7v2.600h-1.700zM18 0.4h1.7v2.900h-1.700zM10 5.3h1.8v2h-1.800zM12 4.4h1.7v2.900h-1.700zM14 5.3h1.8v2h-1.800zM16 5.3h1.7v2.600h-1.700zM18 4.4h1.7v2.900h-1.700zM22 4.4h1.7v2.900h-1.700zM24 5.3h1.8v2h-1.800zM26 4.4h1.7v2.900h-1.700zM28 4.4h1.7v2.900h-1.700zM30 5.3h1.8v2h-1.800zM32 5.3h1.8v2h-1.800zM36 4.4h1.7v2.900h-1.700zM38 5.3h1.8v2h-1.800zM40 4.4h1.7v2.900h-1.700zM42 5.3h1.8v2h-1.800zM46 5.3h1.8v2h-1.800zM48 5.3h1.8v2h-1.800zM50 5.3h1.8v2h-1.800zM52 5.3h1.8v2h-1.800zM70 5.3h1.7v2.600h-1.700zM72 5.3h1.8v2h-1.800zM74 4.4h1.7v2.900h-1.700zM76.4 4.6h1v2.700h-1zM78 5.3h1.8v2h-1.800zM80 5.3h1.8v2h-1.800zM82 4.4h1.7v2.900h-1.700zM84 5.3h1.8v2h-1.800zM90 5.3h1.8v2h-1.800zM92 5.3h1.8v2h-1.800zM94 4.4h1.7v2.900h-1.700zM96.4 4.6h1v2.700h-1zM98 5.3h1.8v2h-1.800zM100 5.3h1.8v2h-1.800zM102 4.4h1.7v2.900h-1.700zM104.4 4.6h1v2.700h-1zM106 5.3h1.8v2h-1.800zM108 5.3h1.8v2h-1.800zM110 5.3h1.8v2h-1.800zM52 21.3h1.7v2.600h-1.700zM54 21.3h1.8v2h-1.800zM56 20.4h1.7v2.900h-1.700zM58.4 20.6h1v2.700h-1zM60 21.3h1.8v2h-1.800zM62 21.3h1.8v2h-1.800zM64 20.4h1.7v2.900h-1.700zM66 21.3h1.8v2h-1.800zM8 37.3h1.8v2h-1.800zM10 37.3h1.8v2h-1.800zM12 36.4h1.7v2.900h-1.700zM14.4 36.6h1v2.700h-1zM16 37.3h1.8v2h-1.800zM18 37.3h1.8v2h-1.800zM20 36.4h1.7v2.900h-1.700zM22.4 36.6h1v2.700h-1zM24 37.3h1.8v2h-1.800zM26 37.3h1.8v2h-1.800zM28 37.3h1.8v2h-1.800zM44 37.3h1.8v2h-1.800zM46 37.3h1.8v2h-1.800zM48 36.4h1.7v2.900h-1.700zM50.4 36.6h1v2.700h-1zM52 37.3h1.8v2h-1.800zM54 37.3h1.8v2h-1.800zM56 36.4h1.7v2.900h-1.700zM58.4 36.6h1v2.700h-1zM60 37.3h1.8v2h-1.800zM62 37.3h1.8v2h-1.800zM64 37.3h1.8v2h-1.800zM26 41.3h1.8v2h-1.800zM28 41.3h1.8v2h-1.800zM30 40.4h1.7v2.900h-1.700zM32.4 40.6h1v2.700h-1zM34 41.3h1.8v2h-1.800zM36 41.3h1.8v2h-1.800zM38 40.4h1.7v2.900h-1.700zM40.4 40.6h1v2.700h-1zM42 41.3h1.8v2h-1.800zM44 41.3h1.8v2h-1.800zM46 41.3h1.8v2h-1.800z"/><path fill="#795e26" d="M36 1.3h1.8v2h-1.800zM38 1.3h1.8v2h-1.800zM40 1.3h1.8v2h-1.800zM42 1.3h1.8v2h-1.800zM44 0.4h1.7v2.900h-1.700zM46 1.3h1.8v2h-1.800zM48.3 2.7h1.2v0.8h-1.200zM50 0.4h1.7v2.900h-1.700zM52 1.3h1.8v2h-1.800zM54 0.4h1.7v2.900h-1.700zM56 1.3h1.8v2h-1.800zM58 1.3h1.8v2h-1.800zM60 1.3h1.8v2h-1.800zM62 0.4h1.7v2.900h-1.700zM20 13.3h1.8v2h-1.800zM22 13.3h1.8v2h-1.800zM24 13.3h1.8v2h-1.800zM26 13.3h1.8v2h-1.800zM28 12.4h1.7v2.900h-1.700zM30 13.3h1.8v2h-1.800zM32.3 14.7h1.2v0.8h-1.200zM34 12.4h1.7v2.900h-1.700zM36 13.3h1.8v2h-1.800zM38 12.4h1.7v2.900h-1.700zM40 13.3h1.8v2h-1.800zM42 13.3h1.8v2h-1.800zM44 13.3h1.8v2h-1.800zM46 12.4h1.7v2.900h-1.700zM16 20.4h1.7v2.900h-1.700zM18 21.3h1.8v2h-1.800zM20 20.4h1.7v2.900h-1.700zM22.4 20.6h1v2.700h-1zM24 21.3h1.8v2h-1.800zM26 21.3h1.8v2h-1.800zM28.3 22.7h1.2v0.8h-1.200zM30 21.3h1.7v2.600h-1.700zM32 21.3h1.8v2h-1.800zM34 21.3h1.7v2.600h-1.700zM36 21.3h1.8v2h-1.800zM38 20.4h1.7v2.900h-1.700zM40 21.3h1.8v2h-1.800zM42 20.4h1.7v2.900h-1.700zM44.4 20.6h1v2.700h-1zM46 21.3h1.8v2h-1.800zM48 21.3h1.8v2h-1.800zM32 37.3h1.8v2h-1.800zM34 36.4h1.7v2.900h-1.700zM36 37.3h1.8v2h-1.800zM38 37.3h1.8v2h-1.800zM40 37.3h1.8v2h-1.800z"/><path fill="#3b3b3b" d="M20.3 6.7h1.2v0.8h-1.200zM34.3 6.7h1.2v0.8h-1.200zM44.3 6.7h1.2v0.8h-1.200zM86.3 6.7h1.2v0.8h-1.200zM14.3 22.7h1.2v0.8h-1.200zM68.3 22.7h1.2v0.8h-1.200zM96.3 22.7h1.2v0.8h-1.200zM98.4 20.6h1v2.700h-1zM100 21.3h1.8v2h-1.800zM102.3 22.7h1.2v0.8h-1.200zM104 21.3h1.8v2h-1.800zM106 21.3h1.8v2h-1.800zM108.3 22.7h1.2v0.8h-1.200zM110 21.3h1.8v2h-1.800zM112 21.3h1.8v2h-1.800zM114.3 22.7h1.2v0.8h-1.200zM116 20.4h1.7v2.900h-1.700zM118 21.3h1.8v2h-1.800zM120 20.4h1.7v2.900h-1.700zM122 21.3h1.8v2h-1.800zM124 21.3h1.8v2h-1.800zM126 21.3h1.8v2h-1.800zM70.3 30.7h1.2v0.8h-1.200zM30.3 38.7h1.2v0.8h-1.200zM66.3 38.7h1.2v0.8h-1.200zM84.3 38.7h1.2v0.8h-1.200zM86.4 36.6h1v2.700h-1zM88 37.3h1.8v2h-1.800zM90.3 38.7h1.2v0.8h-1.200zM92.4 36.6h1v2.700h-1zM94 37.3h1.8v2h-1.800zM8.3 42.7h1.2v0.8h-1.200zM10 41.3h1.8v2h-1.800zM12 41.3h1.8v2h-1.800zM14 41.3h1.8v2h-1.800zM16 40.4h1.7v2.900h-1.700zM18.3 42.7h1.2v0.8h-1.200zM20 40.4h1.7v2.900h-1.700zM22 41.3h1.7v2.600h-1.700zM48.3 42.7h1.2v0.8h-1.200zM8.3 46.7h1.2v0.8h-1.200zM10 44.4h1.7v2.900h-1.700zM12 45.3h1.8v2h-1.800zM14 45.3h1.8v2h-1.800zM16 44.4h1.7v2.900h-1.700zM18.3 46.7h1.2v0.8h-1.200zM20 44.4h1.7v2.900h-1.700zM22 45.3h1.8v2h-1.800zM24 45.3h1.8v2h-1.800zM26.3 46.7h1.2v0.8h-1.200zM28 45.3h1.7v2.600h-1.700zM30 45.3h1.8v2h-1.800zM32 44.4h1.7v2.900h-1.700zM34.4 44.6h1v2.700h-1zM36 45.3h1.8v2h-1.800zM38 45.3h1.8v2h-1.800zM40 44.4h1.7v2.900h-1.700zM14.3 58.7h1.2v0.8h-1.200zM16 57.3h1.8v2h-1.800zM18 57.3h1.8v2h-1.800zM20 56.4h1.7v2.900h-1.700zM22 56.4h1.7v2.900h-1.700zM24 57.3h1.8v2h-1.800zM26 57.3h1.8v2h-1.800zM28.3 58.7h1.2v0.8h-1.200zM30 57.3h1.8v2h-1.800zM32 57.3h1.8v2h-1.800zM34 56.4h1.7v2.900h-1.700zM36.3 58.7h1.2v0.8h-1.200zM38 56.4h1.7v2.900h-1.700zM40 57.3h1.8v2h-1.800zM42 56.4h1.7v2.900h-1.700zM44 57.3h1.8v2h-1.800zM86.3 58.7h1.2v0.8h-1.200zM88 56.4h1.7v2.900h-1.700zM90 57.3h1.8v2h-1.800zM92 56.4h1.7v2.900h-1.700zM94 57.3h1.8v2h-1.800zM14.3 62.7h1.2v0.8h-1.200zM16 61.3h1.8v2h-1.800zM18 61.3h1.8v2h-1.800zM20 60.4h1.7v2.900h-1.700zM22 60.4h1.7v2.900h-1.700zM24 61.3h1.8v2h-1.800zM26 61.3h1.8v2h-1.800zM28.3 62.7h1.2v0.8h-1.200zM30 61.3h1.8v2h-1.800zM32 61.3h1.8v2h-1.800zM34 60.4h1.7v2.900h-1.700zM36.3 62.7h1.2v0.8h-1.200zM38 61.3h1.8v2h-1.800zM40 61.3h1.8v2h-1.800zM42 60.4h1.7v2.900h-1.700zM44 61.3h1.8v2h-1.800zM86.3 62.7h1.2v0.8h-1.200zM88 60.4h1.7v2.900h-1.700zM90 61.3h1.8v2h-1.800zM92 60.4h1.7v2.900h-1.700zM94.3 62.7h1.2v0.8h-1.200zM96 61.3h1.8v2h-1.800zM98 61.3h1.8v2h-1.800zM100 60.4h1.7v2.900h-1.700zM102 61.3h1.8v2h-1.800z"/><path fill="#001080" d="M0 12.4h1.7v2.900h-1.700zM2 13.3h1.8v2h-1.800zM4 12.4h1.7v2.900h-1.700zM6 13.3h1.8v2h-1.800zM8 13.3h1.8v2h-1.800zM10 13.3h1.8v2h-1.800zM12 12.4h1.7v2.900h-1.700zM0 20.4h1.7v2.900h-1.700zM2 21.3h1.8v2h-1.800zM4 20.4h1.7v2.900h-1.700zM6 21.3h1.8v2h-1.800zM8 21.3h1.8v2h-1.800zM10 21.3h1.8v2h-1.800zM12 20.4h1.7v2.900h-1.700zM70 20.4h1.7v2.900h-1.700zM72 21.3h1.8v2h-1.800zM74 20.4h1.7v2.900h-1.700zM76 21.3h1.8v2h-1.800zM78.3 22.7h1.2v0.8h-1.200zM80 21.3h1.8v2h-1.800zM82 20.4h1.7v2.900h-1.700zM84.3 22.7h1.2v0.8h-1.200zM86 20.4h1.7v2.900h-1.700zM88.4 20.6h1v2.700h-1zM90 21.3h1.8v2h-1.800zM92 20.4h1.7v2.900h-1.700zM94 20.4h1.7v2.900h-1.700zM0 29.3h1.8v2h-1.800zM2 29.3h1.8v2h-1.800zM4 28.4h1.7v2.900h-1.700zM6 28.4h1.7v2.900h-1.700zM8 29.3h1.8v2h-1.800zM10 29.3h1.8v2h-1.800zM12.3 30.7h1.2v0.8h-1.200zM14 29.3h1.8v2h-1.800zM16 29.3h1.8v2h-1.800zM18 28.4h1.7v2.900h-1.700zM20 29.3h1.8v2h-1.800zM22 29.3h1.8v2h-1.800zM0 32.4h1.7v2.900h-1.700zM2 33.3h1.8v2h-1.800zM4 32.4h1.7v2.900h-1.700zM6 33.3h1.8v2h-1.800zM8 33.3h1.8v2h-1.800zM10 32.4h1.7v2.900h-1.700zM12.3 34.7h1.2v0.8h-1.200zM14 33.3h1.8v2h-1.800zM16 33.3h1.8v2h-1.800zM18 32.4h1.7v2.900h-1.700zM20 32.4h1.7v2.900h-1.700zM22 33.3h1.8v2h-1.800zM24 33.3h1.8v2h-1.800zM26.3 34.7h1.2v0.8h-1.200zM28 33.3h1.8v2h-1.800zM30 33.3h1.8v2h-1.800zM32 32.4h1.7v2.900h-1.700zM68 36.4h1.7v2.900h-1.700zM70 37.3h1.8v2h-1.800zM72 36.4h1.7v2.900h-1.700zM74.3 38.7h1.2v0.8h-1.200zM76 37.3h1.8v2h-1.800zM78 37.3h1.8v2h-1.800zM80 36.4h1.7v2.900h-1.700zM82 37.3h1.8v2h-1.800zM98 37.3h1.8v2h-1.800zM100 37.3h1.8v2h-1.800zM102 36.4h1.7v2.900h-1.700zM104 36.4h1.7v2.900h-1.700zM106 37.3h1.8v2h-1.800zM108 37.3h1.8v2h-1.800zM110.3 38.7h1.2v0.8h-1.200zM112 37.3h1.8v2h-1.800zM114 37.3h1.8v2h-1.800zM116 36.4h1.7v2.900h-1.700zM118 37.3h1.8v2h-1.800zM120 37.3h1.8v2h-1.800zM50 40.4h1.7v2.900h-1.700zM52 41.3h1.8v2h-1.800zM54 40.4h1.7v2.900h-1.700zM56 41.3h1.8v2h-1.800zM0 56.4h1.7v2.900h-1.700zM2 57.3h1.8v2h-1.800zM4 56.4h1.7v2.900h-1.700zM6 57.3h1.8v2h-1.800zM8 57.3h1.8v2h-1.800zM10 57.3h1.8v2h-1.800zM12 56.4h1.7v2.900h-1.700zM52 56.4h1.7v2.900h-1.700zM54 57.3h1.8v2h-1.800zM56 56.4h1.7v2.900h-1.700zM58 57.3h1.8v2h-1.800zM60 57.3h1.8v2h-1.800zM62 56.4h1.7v2.900h-1.700zM64.3 58.7h1.2v0.8h-1.200zM66 57.3h1.8v2h-1.800zM68 57.3h1.8v2h-1.800zM70 56.4h1.7v2.900h-1.700zM72 56.4h1.7v2.900h-1.700zM74 57.3h1.8v2h-1.800zM76 57.3h1.8v2h-1.800zM78.3 58.7h1.2v0.8h-1.200zM80 57.3h1.8v2h-1.800zM82 57.3h1.8v2h-1.800zM84 56.4h1.7v2.900h-1.700zM0 60.4h1.7v2.900h-1.700zM2 61.3h1.8v2h-1.800zM4 60.4h1.7v2.900h-1.700zM6 61.3h1.8v2h-1.800zM8 61.3h1.8v2h-1.800zM10 61.3h1.8v2h-1.800zM12 60.4h1.7v2.900h-1.700zM52 60.4h1.7v2.900h-1.700zM54 61.3h1.8v2h-1.800zM56 60.4h1.7v2.900h-1.700zM58 61.3h1.8v2h-1.800zM60 61.3h1.8v2h-1.800zM62 60.4h1.7v2.900h-1.700zM64.3 62.7h1.2v0.8h-1.200zM66 61.3h1.8v2h-1.800zM68 61.3h1.8v2h-1.800zM70 60.4h1.7v2.900h-1.700zM72 60.4h1.7v2.900h-1.700zM74 61.3h1.8v2h-1.800zM76 61.3h1.8v2h-1.800zM78.3 62.7h1.2v0.8h-1.200zM80 61.3h1.8v2h-1.800zM82 61.3h1.8v2h-1.800zM84 60.4h1.7v2.900h-1.700z"/><path fill="#000000" d="M16 13.5h1.8v1.300h-1.800zM26 29.5h1.8v1.300h-1.800zM36 33.5h1.8v1.300h-1.800zM48 57.5h1.8v1.300h-1.800zM48 61.5h1.8v1.300h-1.800z"/><path fill="#0431fa" d="M48.5 12.3h0.9v3.300h-0.900zM50.5 12.3h0.9v3.300h-0.900zM50.5 20.3h0.9v3.300h-0.900zM156.5 20.3h0.9v3.300h-0.900zM30.5 28.3h0.9v3.300h-0.900zM112.5 28.3h0.9v3.300h-0.900zM40.5 32.3h0.9v3.300h-0.900zM0.5 48.3h0.9v3.300h-0.900z"/><path fill="#319331" d="M128.5 20.3h0.9v3.300h-0.900zM154.5 20.3h0.9v3.300h-0.900zM42.5 36.3h0.9v3.300h-0.900zM124.5 36.3h0.9v3.300h-0.900zM24.5 40.3h0.9v3.300h-0.900zM58.5 40.3h0.9v3.300h-0.900zM42.5 44.3h0.9v3.300h-0.900zM44.5 44.3h0.9v3.300h-0.900z"/><path fill="#a31515" d="M130 20.4h1.7v2.900h-1.700zM132 20.4h1.7v2.900h-1.700zM134 20.4h1.7v2.900h-1.700zM136 20.4h1.7v2.900h-1.700zM138 20.4h1.7v2.900h-1.700zM140 21.3h1.8v2h-1.800zM142 20.4h1.7v2.900h-1.700zM144 20.4h1.7v2.900h-1.700zM146 21.3h1.8v2h-1.800zM148 20.4h1.7v2.900h-1.700zM150 20.4h1.7v2.900h-1.700zM152 20.4h1.7v2.900h-1.700zM32 28.4h1.7v2.900h-1.700zM34 28.4h1.7v2.900h-1.700zM36 28.4h1.7v2.900h-1.700zM38 28.4h1.7v2.900h-1.700zM40 28.4h1.7v2.900h-1.700zM42 28.4h1.7v2.900h-1.700zM44 28.4h1.7v2.900h-1.700zM46 28.4h1.7v2.900h-1.700zM48 28.4h1.7v2.900h-1.700zM50 28.4h1.7v2.900h-1.700zM52 28.4h1.7v2.900h-1.700zM54 28.4h1.7v2.900h-1.700zM56 28.4h1.7v2.900h-1.700zM58 28.4h1.7v2.900h-1.700zM60 28.4h1.7v2.900h-1.700zM62 28.4h1.7v2.900h-1.700zM64 28.4h1.7v2.900h-1.700zM66 28.4h1.7v2.900h-1.700zM68 28.4h1.7v2.900h-1.700zM74 28.4h1.7v2.900h-1.700zM76 28.4h1.7v2.900h-1.700zM78 28.4h1.7v2.900h-1.700zM80 28.4h1.7v2.900h-1.700zM82 28.4h1.7v2.900h-1.700zM84 28.4h1.7v2.900h-1.700zM86 28.4h1.7v2.900h-1.700zM88 28.4h1.7v2.900h-1.700zM90 28.4h1.7v2.900h-1.700zM92 28.4h1.7v2.900h-1.700zM94 28.4h1.7v2.900h-1.700zM96 28.4h1.7v2.900h-1.700zM98 28.4h1.7v2.900h-1.700zM100 28.4h1.7v2.900h-1.700zM102 28.4h1.7v2.900h-1.700zM104 28.4h1.7v2.900h-1.700zM106 28.4h1.7v2.900h-1.700zM108 28.4h1.7v2.900h-1.700zM110 28.4h1.7v2.900h-1.700z"/><path fill="#7b3814" d="M96.5 36.3h0.9v3.300h-0.900zM122.5 36.3h0.9v3.300h-0.900z"/></g></svg>
<div style="position:absolute;left:2852px;top:184px;width:28px;height:1090px;background:#fbfbfb;border-left:2px solid #efefef;"></div>
<div style="position:absolute;left:2854px;top:563px;width:26px;height:4px;background:#424242;"></div>
<!-- panel -->
<div style="position:absolute;left:696px;top:1274px;width:2184px;height:482px;background:#f8f8f8;border-top:2px solid #e5e5e5;"></div>
<div style="position:absolute;left:737px;top:1299px;font-size:22px;line-height:28px;color:#3b3b3b;white-space:pre;letter-spacing:-0.55px;">PROBLEMS</div>
<div style="position:absolute;left:904px;top:1299px;font-size:22px;line-height:28px;color:#3b3b3b;white-space:pre;letter-spacing:-0.3px;">OUTPUT</div>
<div style="position:absolute;left:1044px;top:1299px;font-size:22px;line-height:28px;color:#3b3b3b;white-space:pre;letter-spacing:-0.3px;">DEBUG CONSOLE</div>
<div style="position:absolute;left:1281px;top:1299px;font-size:22px;line-height:28px;color:#3b3b3b;white-space:pre;letter-spacing:-0.2px;">TERMINAL</div>
<div style="position:absolute;left:1440px;top:1299px;font-size:22px;line-height:28px;color:#3b3b3b;white-space:pre;letter-spacing:-0.5px;">PORTS</div>
<div style="position:absolute;left:1561px;top:1299px;font-size:22px;line-height:28px;color:#3b3b3b;white-space:pre;letter-spacing:0.05px;">COMMENTS</div>
<div style="position:absolute;left:1277px;top:1336px;width:119px;height:2px;background:#005fb8;"></div>
<svg style="position:absolute;left:2423px;top:1295px" width="29" height="33" viewBox="0 0 29 33" ><path d="M14.300 1l13 8v13.300l-13 8.700-13-8.700V9z" fill="none" stroke="#666" stroke-width="1" stroke-linejoin="round"/><path d="M14 16.600l13.600-8.100v13.900L14.300 31.300z" fill="#424242" stroke="#424242" stroke-width="0.800" stroke-linejoin="round"/><path d="M19 19.500c-1.500.3-1.800 1.500-.6 2.100 1.200.6.900 1.900-.7 2.200M18.300 18.400v7.200M20.800 23.600l2-1" stroke="#fff" stroke-width="1" fill="none"/></svg>
<div style="position:absolute;left:2462px;top:1297px;font-size:24px;line-height:30px;color:#3b3b3b;white-space:pre;letter-spacing:-0.5px;">bash</div>
<svg style="position:absolute;left:2532px;top:1295px" width="32" height="32" viewBox="0 0 16 16" ><path fill="#424242" fill-rule="evenodd" clip-rule="evenodd" d="M14 7v1H8v6H7V8H1V7h6V1h1v6h6z"/></svg>
<svg style="position:absolute;left:2568px;top:1299px" width="24" height="24" viewBox="0 0 16 16" ><path fill="#424242" fill-rule="evenodd" clip-rule="evenodd" d="M7.976 10.072l4.357-4.357.62.618L8.284 11h-.618L3 6.333l.619-.618 4.357 4.357z"/></svg>
<svg style="position:absolute;left:2610px;top:1295px" width="32" height="32" viewBox="0 0 16 16" ><path fill="#424242" fill-rule="evenodd" clip-rule="evenodd" d="M14 1H3L2 2v11l1 1h11l1-1V2l-1-1zM8 13H3V2h5v11zm6 0H9V2h5v11z"/></svg>
<svg style="position:absolute;left:2662px;top:1295px" width="32" height="32" viewBox="0 0 16 16" ><path fill="#424242" fill-rule="evenodd" clip-rule="evenodd" d="M10 3h3v1h-1v9l-1 1H4l-1-1V4H2V3h3V2a1 1 0 0 1 1-1h3a1 1 0 0 1 1 1v1zM9 2H6v1h3V2zM4 13h7V4H4v9zm2-8H5v7h1V5zm1 0h1v7H7V5zm2 0h1v7H9V5z"/></svg>
<svg style="position:absolute;left:2713px;top:1295px" width="32" height="32" viewBox="0 0 16 16" ><path fill="#424242" fill-rule="evenodd" clip-rule="evenodd" d="M4 8a1 1 0 1 1-2 0 1 1 0 0 1 2 0zm5 0a1 1 0 1 1-2 0 1 1 0 0 1 2 0zm5 0a1 1 0 1 1-2 0 1 1 0 0 1 2 0z"/></svg>
<svg style="position:absolute;left:2766px;top:1294px" width="32" height="32" viewBox="0 0 16 16" ><path fill="#424242" fill-rule="evenodd" clip-rule="evenodd" d="M8.024 5.928l-4.357 4.357-.62-.618L7.716 5h.618L13 9.667l-.619.618-4.357-4.357z"/></svg>
<svg style="position:absolute;left:2818px;top:1294px" width="32" height="32" viewBox="0 0 16 16" ><path fill="#424242" fill-rule="evenodd" clip-rule="evenodd" d="M8 8.707l3.646 3.647.708-.707L8.707 8l3.647-3.646-.707-.708L8 7.293 4.354 3.646l-.707.708L7.293 8l-3.646 3.646.707.708L8 8.707z"/></svg>
<div style="position:absolute;left:710px;top:1369px;width:16px;height:16px;background:#2a8fd4;border-radius:8px;"></div>
<div class="term" style="top:1364px"><span class="tg">@iaindillingham</span> ➜ <b class="tb">/workspaces/ehrql<span class="h">-</span>tutorial</b> <b class="tc">(</b><b class="tr">main</b><b class="tc">)</b> $ opensafely exec ehrql:v0 generate<span class="h">-</span>dataset dataset<span class="u">_</span>definition<span class="p">.</span>py</div>
<div class="term" style="top:1394px"><span class="td">2023<span class="h">-</span>10<span class="h">-</span>24 13:46:55</span> [<b class="tg">info</b>     ] <b>Compiling dataset definition from dataset<span class="u">_</span>definition<span class="p">.</span>py</b></div>
<div class="term" style="top:1424px"><span class="td">2023<span class="h">-</span>10<span class="h">-</span>24 13:46:55</span> [<b class="tg">info</b>     ] <b>Generating dummy dataset</b></div>
<div class="term" style="top:1454px"><span class="td">2023<span class="h">-</span>10<span class="h">-</span>24 13:46:55</span> [<b class="tg">info</b>     ] <b>Attempting to generate 500 matching patients (random seed: BwRV3spP, timeout: 60s)</b></div>
<div class="term" style="top:1484px"><span class="td">2023<span class="h">-</span>10<span class="h">-</span>24 13:46:55</span> [<b class="tg">info</b>     ] <b>Use `dataset<span class="p">.</span>configure<span class="u">_</span>dummy<span class="u">_</span>data(population<span class="u">_</span>size=N)` to change number of patients generated</b></div>
<div class="term" style="top:1514px"><span class="td">2023<span class="h">-</span>10<span class="h">-</span>24 13:46:55</span> [<b class="tg">info</b>     ] <b>Building dataset and writing results</b></div>
<div class="term" style="top:1544px">patient<span class="u">_</span>id,asthma<span class="u">_</span>med<span class="u">_</span>date,asthma<span class="u">_</span>med<span class="u">_</span>code</div>
<div class="term" style="top:1574px">1,2023<span class="h">-</span>07<span class="h">-</span>07,39113611000001102</div>
<div class="term" style="top:1604px">2,2023<span class="h">-</span>07<span class="h">-</span>19,39113611000001102</div>
<div class="term" style="top:1634px">3,2018<span class="h">-</span>09<span class="h">-</span>15,39113311000001107</div>
<div class="term" style="top:1664px">5,2004<span class="h">-</span>11<span class="h">-</span>18,39113611000001102</div>
<div class="term" style="top:1694px">6,2007<span class="h">-</span>06<span class="h">-</span>18,39113611000001102</div>
<div class="term" style="top:1724px">7,1949<span class="h">-</span>12<span class="h">-</span>11,39113311000001107</div>
<div style="position:absolute;left:2860px;top:1362px;width:6px;height:6px;background:#c4c4c4;"></div>
<div style="position:absolute;left:2859px;top:1549px;width:7px;height:13px;background:#1a85d6;"></div>
<div style="position:absolute;left:2859px;top:1745px;width:7px;height:6px;background:#c4c4c4;"></div>
<!-- status bar -->
<div style="position:absolute;left:0px;top:1756px;width:2880px;height:44px;background:#f8f8f8;border-top:2px solid #e5e5e5;"></div>
<div style="position:absolute;left:0px;top:1758px;width:446px;height:42px;background:#005fb8;"></div>
<svg style="position:absolute;left:20px;top:1764px" width="28" height="28" viewBox="0 0 16 16" ><path fill="#fff" fill-rule="evenodd" clip-rule="evenodd" d="M12.904 9.570L8.928 5.596l3.976-3.976-.619-.620L8 5.286v.619l4.285 4.285.620-.618zM3 5.620l4.072 4.070L3 13.763l.619.618L8 10v-.619L3.619 5 3 5.619z"/></svg>
<div style="position:absolute;left:55px;top:1764px;font-size:24px;line-height:30px;color:#fff;white-space:pre;letter-spacing:0.68px;-webkit-text-stroke:0.3px #fff;">Codespaces: expert space acorn</div>
<svg style="position:absolute;left:459px;top:1764px" width="28" height="28" viewBox="0 0 28 28" ><g fill="none" stroke="#3b3b3b" stroke-width="1.800"><circle cx="7" cy="5" r="3"/><circle cx="7" cy="23" r="3"/><circle cx="19" cy="9" r="3"/><path d="M7 8v12M19 12c0 5-12 3-12 8"/></g></svg>
<div style="position:absolute;left:493px;top:1764px;font-size:24px;line-height:30px;color:#3b3b3b;white-space:pre;letter-spacing:0.85px;">main*+</div>
<svg style="position:absolute;left:586px;top:1764px" width="28" height="28" viewBox="0 0 16 16" ><path fill="#3b3b3b" fill-rule="evenodd" clip-rule="evenodd" d="M2.006 8.267L.78 9.5 0 8.73l2.09-2.07.76.01 2.09 2.12-.76.76-1.167-1.18a5 5 0 0 0 9.4 1.983l.813.597a6 6 0 0 1-11.22-2.683zm10.99-.466L11.76 6.55l-.76.76 2.09 2.11.76.01 2.09-2.07-.75-.76-1.194 1.18a6 6 0 0 0-11.11-2.92l.81.594a5 5 0 0 1 9.3 2.346z"/></svg>
<svg style="position:absolute;left:642px;top:1764px" width="28" height="28" viewBox="0 0 16 16" ><path fill="#3b3b3b" fill-rule="evenodd" clip-rule="evenodd" d="M8.6 1c1.6.1 3.1.9 4.2 2 1.3 1.4 2 3.1 2 5.1 0 1.6-.6 3.1-1.6 4.4-1 1.2-2.4 2.1-4 2.4-1.6.3-3.2.1-4.6-.7-1.4-.8-2.5-2-3.1-3.5C.9 9.2.8 7.5 1.3 6c.5-1.6 1.4-2.9 2.8-3.8C5.4 1.3 7 .9 8.6 1zm.5 12.900c1.300-.3 2.500-1 3.400-2.100.8-1.100 1.300-2.400 1.200-3.800 0-1.600-.6-3.200-1.700-4.300-1-1-2.200-1.600-3.600-1.700-1.300-.1-2.700.2-3.800 1-1.100.8-1.900 1.900-2.300 3.300-.4 1.300-.4 2.700.2 4 .6 1.300 1.500 2.300 2.700 3 1.200.7 2.600.9 3.900.6zM7.900 7.500L10.300 5l.7.7-2.400 2.500 2.400 2.500-.7.7-2.400-2.500-2.400 2.500-.7-.7 2.400-2.500-2.400-2.500.7-.7 2.400 2.500z"/></svg>
<div style="position:absolute;left:677px;top:1764px;font-size:24px;line-height:30px;color:#3b3b3b;white-space:pre;">0</div>
<svg style="position:absolute;left:699px;top:1764px" width="28" height="28" viewBox="0 0 16 16" ><path fill="#3b3b3b" fill-rule="evenodd" clip-rule="evenodd" d="M7.560 1h.880l6.540 12.260-.440.740H1.440L1 13.260 7.560 1zM8 2.280L2.280 13H13.700L8 2.280zM8.625 12v-1h-1.250v1h1.250zm-1.250-2V6h1.250v4h-1.250z"/></svg>
<div style="position:absolute;left:734px;top:1764px;font-size:24px;line-height:30px;color:#3b3b3b;white-space:pre;">0</div>
<svg style="position:absolute;left:781px;top:1764px" width="28" height="28" viewBox="0 0 28 28" ><g fill="none" stroke="#3b3b3b" stroke-width="1.700"><path d="M6.700 25.500L14 10.500l7.500 15M8.800 21.900h10.400"/><circle cx="14" cy="9" r="1.900"/><path d="M10.790 5.170A5 5 0 0 0 10.790 12.830M17.210 5.170A5 5 0 0 1 17.210 12.830M7.570 1.340A10 10 0 0 0 7.570 16.660M20.430 1.340A10 10 0 0 1 20.430 16.660"/></g></svg>
<div style="position:absolute;left:816px;top:1764px;font-size:24px;line-height:30px;color:#3b3b3b;white-space:pre;">0</div>
<div style="position:absolute;left:1847px;top:1764px;font-size:24px;line-height:30px;color:#3b3b3b;white-space:pre;letter-spacing:0.55px;">Ln 17, Col 1</div>
<div style="position:absolute;left:2017px;top:1764px;font-size:24px;line-height:30px;color:#3b3b3b;white-space:pre;letter-spacing:0.5px;">Spaces: 4</div>
<div style="position:absolute;left:2161px;top:1764px;font-size:24px;line-height:30px;color:#3b3b3b;white-space:pre;letter-spacing:1.0px;">UTF-8</div>
<div style="position:absolute;left:2266px;top:1764px;font-size:24px;line-height:30px;color:#3b3b3b;white-space:pre;letter-spacing:0.3px;">LF</div>
<div style="position:absolute;left:2362px;top:1764px;font-size:24px;line-height:30px;color:#3b3b3b;white-space:pre;letter-spacing:0.6px;">Python</div>
<div style="position:absolute;left:2470px;top:1764px;font-size:24px;line-height:30px;color:#3b3b3b;white-space:pre;letter-spacing:1.55px;">3.11.6 64-bit</div>
<div style="position:absolute;left:2653px;top:1764px;font-size:24px;line-height:30px;color:#3b3b3b;white-space:pre;letter-spacing:0.55px;">Layout: U.S.</div>
<svg style="position:absolute;left:2324px;top:1767px" width="25" height="25" viewBox="0 0 25 25" ><g fill="none" stroke="#3b3b3b" stroke-width="1.700"><path d="M7.500 1.500c-2.600 0-3.400 1-3.400 3.300v3.100c0 1.700-.8 2.500-2.600 2.700 1.800.2 2.600 1 2.600 2.700v3.100c0 2.300.8 3.300 3.400 3.300"/><path d="M15.500 1.500c2.600 0 3.400 1 3.400 3.300v3.100c0 1.700.8 2.500 2.600 2.700"/></g><circle cx="18.300" cy="18" r="5.200" fill="#3b3b3b"/></svg>
<svg style="position:absolute;left:2822px;top:1764px" width="28" height="28" viewBox="0 0 16 16" ><path fill="#3b3b3b" fill-rule="evenodd" clip-rule="evenodd" d="M13.377 10.573a7.630 7.630 0 0 1-.383-2.380V6.195a5.115 5.115 0 0 0-1.268-3.446 5.138 5.138 0 0 0-3.242-1.722c-.694-.072-1.400 0-2.070.227-.670.215-1.280.574-1.794 1.053a4.923 4.923 0 0 0-1.208 1.675 5.067 5.067 0 0 0-.431 2.022v2.200a7.610 7.610 0 0 1-.383 2.370L2 12.343l.479.658h3.505c0 .526.215 1.040.586 1.412.370.370.885.586 1.412.586.526 0 1.040-.215 1.411-.586s.587-.886.587-1.412h3.505l.478-.658-.586-1.770zm-4.690 3.147a.997.997 0 0 1-.705.299.997.997 0 0 1-.706-.3.997.997 0 0 1-.3-.705h1.999a.939.939 0 0 1-.287.706zm-5.515-1.710l.371-1.114a8.633 8.633 0 0 0 .443-2.691V6.004c0-.563.120-1.113.347-1.616.227-.514.550-.969.969-1.340.419-.382.910-.670 1.436-.837.538-.180 1.100-.240 1.650-.180a4.147 4.147 0 0 1 2.597 1.400 4.133 4.133 0 0 1 1.004 2.776v2.010c0 .909.144 1.818.443 2.691l.371 1.113h-9.630v-.012z"/></svg>
</div></body></html>
